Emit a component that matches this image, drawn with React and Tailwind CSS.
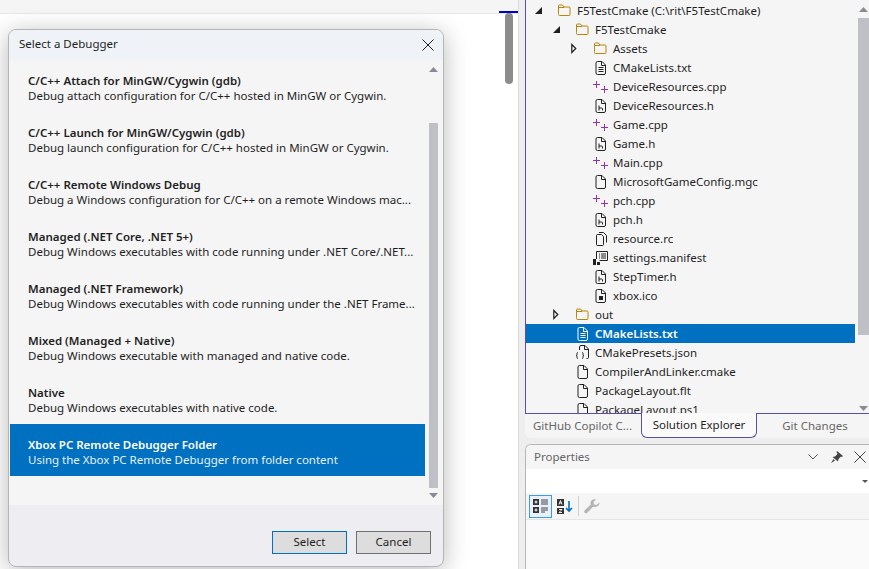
import React from 'react';

const font = { fontFamily: '"Noto Sans", sans-serif' };

const debuggers = [
  { title: 'C/C++ Attach for MinGW/Cygwin (gdb)', desc: 'Debug attach configuration for C/C++ hosted in MinGW or Cygwin.' },
  { title: 'C/C++ Launch for MinGW/Cygwin (gdb)', desc: 'Debug launch configuration for C/C++ hosted in MinGW or Cygwin.' },
  { title: 'C/C++ Remote Windows Debug', desc: 'Debug a Windows configuration for C/C++ on a remote Windows mac...' },
  { title: 'Managed (.NET Core, .NET 5+)', desc: 'Debug Windows executables with code running under .NET Core/.NET...' },
  { title: 'Managed (.NET Framework)', desc: 'Debug Windows executables with code running under the .NET Frame...' },
  { title: 'Mixed (Managed + Native)', desc: 'Debug Windows executable with managed and native code.' },
  { title: 'Native', desc: 'Debug Windows executables with native code.' },
  { title: 'Xbox PC Remote Debugger Folder', desc: 'Using the Xbox PC Remote Debugger from folder content', selected: true },
];

const FolderIcon = () => (
  <svg width="17" height="13" viewBox="0 0 17 13" fill="none" stroke="#b8860b" strokeWidth="1">
    <path d="M1.5 9.5V2a1 1 0 0 1 1-1h3l1.500 2h5a1 1 0 0 1 1 1v6.500a1 1 0 0 1-1 1h-9.500a1 1 0 0 1-1-1z" />
    <path d="M1.500 3.500h5.500" />
  </svg>
);

const Page = ({ children, color = '#212121' }) => (
  <svg width="13" height="15" viewBox="0 -1 13 15" fill="none" stroke={color} strokeWidth="1">
    <path d="M2.500 0.500h4.500l3.500 3.500v8a1.500 1.500 0 0 1-1.500 1.500h-6.500a1.500 1.500 0 0 1-1.500-1.500v-10a1.500 1.500 0 0 1 1.500-1.500z" />
    <path d="M6.500 0.500v4h4" />
    {children}
  </svg>
);

const TextIcon = ({ color }) => (
  <Page color={color}>
    <path d="M3.500 6.500h5M3.500 8.500h5M3.500 10.500h5" />
  </Page>
);

const HeaderIcon = () => (
  <Page>
    <path d="M4 6.500v5M4 9h2.500a1 1 0 0 1 1 1v1.500" />
  </Page>
);

const CppIcon = () => (
  <svg width="17" height="15" viewBox="0 -1 17 15" fill="none" stroke="#9333a8" strokeWidth="1">
    <path d="M0 4.500h7M3.500 1v7M8 9.500h7M11.500 6v7" />
  </svg>
);

const RcIcon = () => (
  <svg width="13" height="15" viewBox="0 -1 13 15" fill="none" stroke="#212121" strokeWidth="1">
    <path d="M2.500 2.500h4l2 2v8a1 1 0 0 1-1 1h-5a1 1 0 0 1-1-1v-9a1 1 0 0 1 1-1z" />
    <path d="M4 .5h4.500l3 3v7" />
  </svg>
);

const ManifestIcon = () => (
  <svg width="17" height="15" viewBox="0 0 17 15" fill="none" stroke="#212121" strokeWidth="1">
    <path d="M3.500 9V1.500h11v9h-8" />
    <path d="M6 4h1M8 4h5M6 6h1M8 6h5M6 8h1M8 8h5" />
    <rect x="0" y="9" width="3" height="3" fill="#212121" stroke="none" />
    <rect x="0" y="12" width="3" height="3" fill="#212121" stroke="none" />
    <rect x="4" y="12" width="3" height="3" fill="#212121" stroke="none" />
  </svg>
);

const IcoIcon = () => (
  <Page>
    <rect x="4" y="7" width="4" height="4" fill="#212121" stroke="none" />
  </Page>
);

const JsonIcon = () => (
  <svg width="17" height="15" viewBox="0 0 17 15" fill="none" stroke="#212121" strokeWidth="1">
    <path d="M4.500 5V2a1.500 1.500 0 0 1 1.500-1.500h4l3.500 3.500v8.500a1 1 0 0 1-1 1h-1" />
    <path d="M9.500.5v4h4" />
    <path d="M3 7.500c-1 0-1 .5-1 1.500v.5c0 .7-.4 1-1 1 .6 0 1 .3 1 1v.5c0 1 0 1.500 1 1.500M7 7.500c1 0 1 .5 1 1.500v.5c0 .7.4 1 1 1-.6 0-1 .3-1 1v.5c0 1 0 1.500-1 1.500" />
  </svg>
);

const Expanded = () => (
  <svg width="7" height="7" viewBox="0 0 7 7"><path d="M7 0v7H0z" fill="#1f1f1f" /></svg>
);

const Collapsed = () => (
  <svg width="6" height="11" viewBox="0 0 6 11" fill="none" stroke="#1f1f1f" strokeWidth="1.200"><path d="M.8 1.500l4 4-4 4z" /></svg>
);

const tree = [
  { level: 0, arrow: 'open', icon: <FolderIcon />, name: 'F5TestCmake (C:\\rit\\F5TestCmake)' },
  { level: 1, arrow: 'open', icon: <FolderIcon />, name: 'F5TestCmake' },
  { level: 2, arrow: 'closed', icon: <FolderIcon />, name: 'Assets' },
  { level: 2, icon: <TextIcon />, name: 'CMakeLists.txt' },
  { level: 2, icon: <CppIcon />, name: 'DeviceResources.cpp' },
  { level: 2, icon: <HeaderIcon />, name: 'DeviceResources.h' },
  { level: 2, icon: <CppIcon />, name: 'Game.cpp' },
  { level: 2, icon: <HeaderIcon />, name: 'Game.h' },
  { level: 2, icon: <CppIcon />, name: 'Main.cpp' },
  { level: 2, icon: <Page />, name: 'MicrosoftGameConfig.mgc' },
  { level: 2, icon: <CppIcon />, name: 'pch.cpp' },
  { level: 2, icon: <HeaderIcon />, name: 'pch.h' },
  { level: 2, icon: <RcIcon />, name: 'resource.rc' },
  { level: 2, icon: <ManifestIcon />, name: 'settings.manifest' },
  { level: 2, icon: <HeaderIcon />, name: 'StepTimer.h' },
  { level: 2, icon: <IcoIcon />, name: 'xbox.ico' },
  { level: 1, arrow: 'closed', icon: <FolderIcon />, name: 'out' },
  { level: 1, icon: <TextIcon color="#ffffff" />, name: 'CMakeLists.txt', selected: true },
  { level: 1, icon: <JsonIcon />, name: 'CMakePresets.json' },
  { level: 1, icon: <Page />, name: 'CompilerAndLinker.cmake' },
  { level: 1, icon: <Page />, name: 'PackageLayout.flt' },
  { level: 1, icon: <Page />, name: 'PackageLayout.ps1' },
];

const indent = ['pl-[7px]', 'pl-[25px]', 'pl-[43px]'];

const TreeRow = ({ row }) => (
  <div className={`flex h-[19px] shrink-0 items-center ${indent[row.level]} ${row.selected ? 'bg-[#0070c0] text-white' : 'text-[#1f1f1f]'}`}>
    <span className="flex w-[24px] shrink-0 items-center pl-[2px]">
      {row.arrow === 'open' && <Expanded />}
      {row.arrow === 'closed' && <Collapsed />}
    </span>
    <span className="flex w-[20px] shrink-0 items-center justify-center pr-[3px]">{row.icon}</span>
    <span className={`whitespace-nowrap text-[11.5px] leading-none ${row.selected ? 'font-semibold' : ''}`}>{row.name}</span>
  </div>
);

const ScrollUp = ({ color = '#8a8a96' }) => (
  <svg width="9" height="5" viewBox="0 0 9 5"><path d="M4.500 0L9 5H0z" fill={color} /></svg>
);

const ScrollDown = ({ color = '#8a8a96' }) => (
  <svg width="9" height="5" viewBox="0 0 9 5"><path d="M0 0h9L4.500 5z" fill={color} /></svg>
);

const DebuggerItem = ({ item }) => (
  <div className={`flex h-[52px] shrink-0 flex-col justify-center whitespace-nowrap pl-[18px] pt-[3px] text-[11.5px] leading-[15px] ${item.selected ? 'bg-[#0070c0] text-white' : 'text-[#1f1f1f]'}`}>
    <div className="font-semibold">{item.title}</div>
    <div className={item.selected ? 'text-[#e6f0f8]' : ''}>{item.desc}</div>
  </div>
);

const SelectDebuggerDialog = () => (
  <div className="absolute left-[8px] top-[29px] flex h-[538px] w-[436px] flex-col overflow-hidden rounded-lg border border-[#b5b5b5] bg-[#eeeef2] shadow-[0_4px_24px_rgba(0,0,0,0.28)]">
    <div className="flex h-[30px] shrink-0 items-center justify-between bg-[#eff3f7] pl-[10px] pr-[9px] text-[11.5px] text-[#1f1f1f]">
      <span className="pb-[2px]">Select a Debugger</span>
      <svg width="12" height="12" viewBox="0 0 12 12" stroke="#1f1f1f" strokeWidth="1"><path d="M.5.5l11 11M11.500.5l-11 11" /></svg>
    </div>
    <div className="flex h-[445px] shrink-0 bg-[#f5f5f5]">
      <div className="ml-px flex w-[415px] shrink-0 flex-col">
        {debuggers.map((item) => (
          <DebuggerItem key={item.title} item={item} />
        ))}
      </div>
      <div className="ml-[4px] flex w-[9px] flex-col items-center pt-[7px]">
        <ScrollUp />
        <div className="mt-[51px] h-[365px] w-[9px] shrink-0 bg-[#bfbfc6]" />
        <div className="mt-[5px]"><ScrollDown /></div>
      </div>
    </div>
    <div className="flex flex-1 items-start justify-end gap-[9px] pr-[12px] pt-[26px] text-[11.5px] text-[#1f1f1f]">
      <button className="h-[23px] w-[75px] border border-[#0070c0] bg-[#dddddd] pb-[2px]">Select</button>
      <button className="h-[23px] w-[75px] border border-[#707070] bg-[#dddddd] pb-[2px]">Cancel</button>
    </div>
  </div>
);

const PropertiesIcons = () => (
  <div className="flex h-[27px] shrink-0 items-center border-b border-[#e5e5e5] bg-[#f5f5f5] pl-[3px]">
    <div className="flex h-[23px] w-[23px] items-center justify-center border border-[#3c9be8] bg-[#e8f1fa]">
      <svg width="15" height="14" viewBox="0 0 15 14">
        <rect x="0" y="0" width="6" height="6" fill="#333" />
        <rect x="0" y="8" width="6" height="6" fill="#333" />
        <path d="M1.500 3h3M3 1.500v3M1.500 11h3M3 9.500v3" stroke="#fff" />
        <path d="M8 1h7M8 3h7M8 5h7M8 9h7M8 11h7M8 13h4" stroke="#444" />
      </svg>
    </div>
    <div className="ml-[3px] flex h-[23px] w-[20px] items-center justify-center">
      <svg width="16" height="15" viewBox="0 0 16 15">
        <rect x="0" y="0" width="7" height="7" fill="#333" />
        <rect x="0" y="9" width="7" height="6" fill="#333" />
        <path d="M2 5.500L3.500 1.500 5 5.500M2.500 4h2M2 10.500h3l-3 3h3" stroke="#fff" fill="none" strokeWidth="0.900" />
        <path d="M12 2v10M9 9l3 3 3-3" stroke="#0070c0" fill="none" strokeWidth="1.600" />
      </svg>
    </div>
    <div className="ml-[3px] h-[20px] w-px bg-[#cfcfcf]" />
    <div className="ml-[5px]">
      <svg width="16" height="16" viewBox="0 0 16 16">
        <path d="M15.500 4.500l-3 2.500-2.500-.5L9.500 4 12 1.500C9.500.5 6.500 2 6.500 5c0 .6.100 1.100.3 1.500L.8 12.200c-.8.800-.8 1.800-.1 2.600.8.700 1.800.7 2.600-.1l5.700-6c2.800 1.200 7-1 6.500-4.200z" fill="#b5b5b5" />
      </svg>
    </div>
  </div>
);

const SolutionPanel = () => (
  <div className="flex h-[414px] shrink-0 border-b border-l border-[#5c4da8] bg-[#f5f5f5]">
    <div className="flex min-w-0 flex-1 flex-col overflow-hidden pr-[3px] pt-[1px]">
      {tree.map((row, i) => (
        <TreeRow key={i} row={row} />
      ))}
    </div>
    <div className="flex w-[11px] shrink-0 flex-col items-center bg-[#f5f5f5] pt-[7px]">
      <ScrollUp />
      <div className="mt-[6px] h-[317px] w-[11px] shrink-0 bg-[#bfbfc6]" />
      <div className="mt-auto pb-[2px]"><ScrollDown /></div>
    </div>
  </div>
);

const TabStrip = () => (
  <div className="flex h-[24px] shrink-0 rounded-bl-md bg-[#f5f5f5] text-[11.5px] text-[#666666]">
    <div className="flex w-[116px] shrink-0 items-center pl-[8px]">GitHub Copilot C...</div>
    <div className="-mt-px flex w-[116px] shrink-0 items-center justify-center rounded-b-md border border-t-0 border-[#5c4da8] bg-[#fafafa] text-[#1f1f1f]">Solution Explorer</div>
    <div className="flex flex-1 items-center justify-center pl-[4px]">Git Changes</div>
  </div>
);

const PropertiesPanel = () => (
  <div className="mt-[6px] flex min-h-0 flex-1 flex-col overflow-hidden rounded-tl-md border-l border-t border-[#b5b5b5] bg-[#fafafa]">
    <div className="flex h-[24px] shrink-0 items-center justify-between bg-[#f5f5f5] pl-[8px] pr-[3px] text-[11.5px] text-[#666666]">
      <span>Properties</span>
      <div className="flex items-center gap-[11px]">
        <svg width="10" height="6" viewBox="0 0 10 6" fill="none" stroke="#555" strokeWidth="1"><path d="M.5.5L5 5 9.500.5" /></svg>
        <svg width="14" height="12" viewBox="0 0 14 12" fill="#444"><path d="M8 0l6 5-1 1-1-.5L9.500 8 9 10.500 3.500 6 6 5.500 8.500 3 7.500 1zM4.500 8l1.500 1.500L2 12z" /></svg>
        <svg width="12" height="12" viewBox="0 0 12 12" stroke="#444" strokeWidth="1"><path d="M.5.5l11 11M11.500.5l-11 11" /></svg>
      </div>
    </div>
    <div className="flex h-[24px] shrink-0 items-center justify-end bg-white pr-[1px]">
      <svg width="6" height="3" viewBox="0 0 6 3"><path d="M0 0h6L3 3z" fill="#555" /></svg>
    </div>
    <PropertiesIcons />
    <div className="flex-1" />
  </div>
);

export default function App() {
  return (
    <div className="relative flex h-[569px] w-[869px] overflow-hidden bg-white" style={font}>
      <div className="flex w-[518px] shrink-0 flex-col">
        <div className="h-[14px] shrink-0 border-b border-[#e8e8e8] bg-[#f5f5f5]" />
        <div className="flex flex-1 justify-end">
          <div className="relative mr-[5px] w-[8px]">
            <div className="absolute -top-[1px] h-[71px] w-[8px] rounded-full bg-[#8c8c8c]" />
          </div>
        </div>
      </div>
      <div className="absolute left-[499px] top-[11px] h-[2px] w-[19px] bg-[#0000c8]" />
      <div className="w-[7px] shrink-0 border-l border-[#dcdcdc] bg-[#eeeeee]" />
      <div className="flex min-w-0 flex-1 flex-col bg-[#eeeeee]">
        <SolutionPanel />
        <TabStrip />
        <PropertiesPanel />
      </div>
      <SelectDebuggerDialog />
    </div>
  );
}
